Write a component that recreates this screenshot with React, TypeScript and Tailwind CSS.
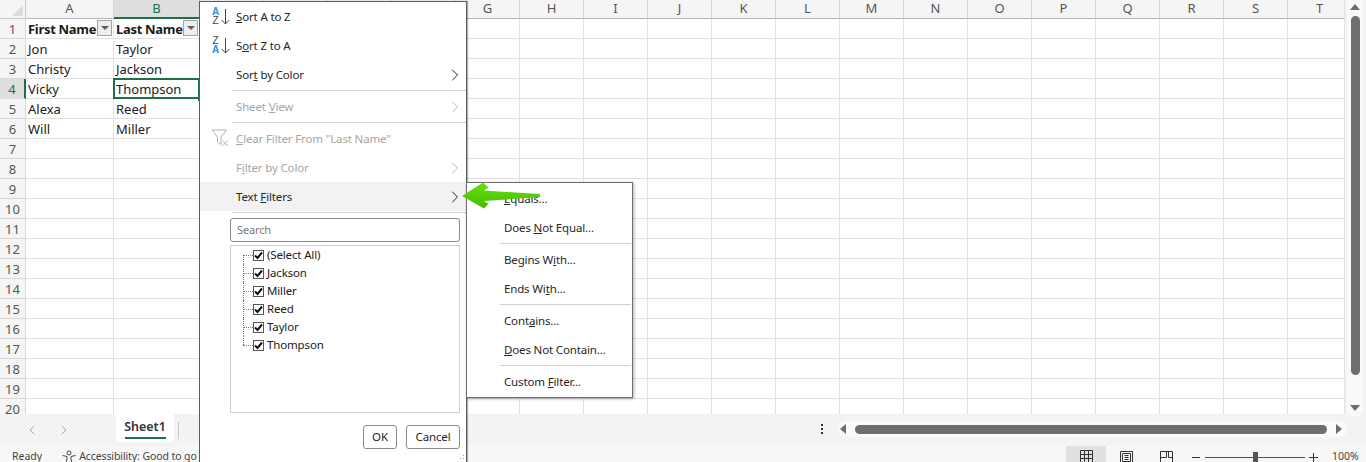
import { ChevronRight, ChevronLeft } from 'lucide-react';
import type { ReactNode } from 'react';

const widths = [88, 86, 64, 64, 64, 64, 64, 64, 64, 64, 64, 64, 64, 64, 64, 64, 64, 64, 64, 64];
const letters = 'ABCDEFGHIJKLMNOPQRST'.split('');
const rows = [
  ['First Name', 'Last Name'],
  ['Jon', 'Taylor'],
  ['Christy', 'Jackson'],
  ['Vicky', 'Thompson'],
  ['Alexa', 'Reed'],
  ['Will', 'Miller'],
];
const names = ['(Select All)', 'Jackson', 'Miller', 'Reed', 'Taylor', 'Thompson'];

function FilterButton() {
  return (
    <span className="absolute right-[1px] top-[1px] flex h-[16px] w-[15px] items-center justify-center border border-[#a6a6a6] bg-[#eeeeee]">
      <span className="h-0 w-0 border-x-[4px] border-t-[4px] border-x-transparent border-t-[#5f5f5f]" />
    </span>
  );
}

function Sheet() {
  return (
    <div className="h-[414px] overflow-hidden border-r border-[#e1e1e1] font-['Noto_Sans',sans-serif] text-[13px] text-[#1b1b1b]">
      <div className="flex h-[19px]">
        <div className="flex w-[26px] shrink-0 items-end justify-end border-r border-b border-[#c8c8c8] bg-[#f5f5f5] p-[2px]">
          <span className="h-0 w-0 border-b-[11px] border-l-[11px] border-b-[#dcdcdc] border-l-transparent" />
        </div>
        {letters.map((l, i) => (
          <div
            key={l}
            style={{ width: widths[i] }}
            className={
              i === 1
                ? 'flex shrink-0 items-center justify-center border-r border-b-2 border-[#d0d0d0] border-b-[#1f7145] bg-[#dedede] text-[13px] text-[#1f7145]'
                : 'flex shrink-0 items-center justify-center border-r border-b border-[#d4d4d4] border-b-[#b5b5b5] bg-[#f5f5f5] text-[13px] text-[#555555]'
            }
          >
            {i >= 2 && i <= 5 ? '' : l}
          </div>
        ))}
      </div>
      {Array.from({ length: 20 }, (_, r) => (
        <div key={r} className="flex h-[20px]">
          <div
            className={
              r === 3
                ? 'flex w-[26px] shrink-0 items-center justify-center border-r-2 border-b border-[#e0e0e0] border-r-[#1f7145] bg-[#dedede] text-[13px] leading-[14px] text-[#1f7145]'
                : 'flex w-[26px] shrink-0 items-center justify-center border-r border-b border-[#d8d8d8] bg-[#f5f5f5] text-[13px] leading-[14px] text-[#555555]'
            }
          >
            {r + 1}
          </div>
          {letters.map((l, c) => {
            const selected = r === 3 && c === 1;
            return (
              <div
                key={l}
                style={{ width: widths[c] }}
                className={
                  r === 0 && c < 2
                    ? 'relative flex shrink-0 items-center border-r border-b border-[#e1e1e1] pt-[2px] pl-[2px] font-bold tracking-[-0.3px]'
                    : 'relative flex shrink-0 items-center border-r border-b border-[#e1e1e1] pt-[2px] pl-[2px]'
                }
              >
                {c < 2 && rows[r] ? rows[r][c] : ''}
                {r === 0 && c < 2 && <FilterButton />}
                {selected && (
                  <>
                    <span className="absolute -top-[1px] -left-[1px] h-[21px] w-[87px] border-2 border-[#1f7145]" />
                    <span className="absolute top-[17px] left-[84px] h-[5px] w-[3px] bg-[#1f7145]" />
                  </>
                )}
              </div>
            );
          })}
        </div>
      ))}
    </div>
  );
}

function SortIcon({ flip }: { flip?: boolean }) {
  const blue = 'font-bold text-[#2f8fd8]';
  const dark = 'text-[#444444]';
  return (
    <span className="absolute top-[6px] left-[11px] flex h-[17px] items-start">
      <span className="flex w-[9px] flex-col items-center gap-[1px] font-['Liberation_Sans',sans-serif] text-[10px] leading-[8px]">
        <span className={flip ? dark : blue}>{flip ? 'Z' : 'A'}</span>
        <span className={flip ? blue : dark}>{flip ? 'A' : 'Z'}</span>
      </span>
      <svg width="9" height="17" viewBox="0 0 9 17" className="ml-[1px]">
        <path d="M4.500 1V16M0.700 12L4.500 16L8.300 12" fill="none" stroke="#444444" strokeWidth="1" />
      </svg>
    </span>
  );
}

function Item({ children, arrow, disabled, hot, icon }: { children: ReactNode; arrow?: boolean; disabled?: boolean; hot?: boolean; icon?: ReactNode }) {
  return (
    <div
      className={
        (hot ? 'bg-[#f2f2f2] ' : '') +
        (disabled ? 'text-[#a6a6a6] ' : 'text-[#262626] ') +
        'relative flex h-[29px] items-center justify-between pr-[1px] pl-[36px]'
      }
    >
      {icon}
      <span>{children}</span>
      {arrow && <ChevronRight size={20} strokeWidth={1.2} className={disabled ? 'text-[#b5b5b5]' : 'text-[#222222]'} />}
    </div>
  );
}

function Separator({ inset }: { inset: string }) {
  return (
    <div className={'flex h-[3px] items-center ' + inset}>
      <div className="h-[1px] w-full bg-[#d0d0d0]" />
    </div>
  );
}

function ClearFilterIcon() {
  return (
    <svg width="18" height="18" viewBox="0 0 18 18" className="absolute top-[5px] left-[11px]">
      <path d="M1 1H15.500L10 8V15.500L6.500 13V8Z" fill="none" stroke="#b3b3b3" strokeWidth="1" />
      <path d="M11.500 11.500L17 17M17 11.500L11.500 17" fill="none" stroke="#b3b3b3" strokeWidth="1" />
    </svg>
  );
}

function FilterMenu() {
  return (
    <div className="absolute top-[1px] left-[199px] flex h-[461px] w-[268px] flex-col border-x border-t border-[#5c5c5c] bg-white font-['Noto_Sans',sans-serif] text-[11.5px] tracking-[-0.15px] shadow-[1px_0_1px_rgba(0,0,0,0.3)]">
      <Item icon={<SortIcon />}><span className="underline">S</span>ort A to Z</Item>
      <Item icon={<SortIcon flip />}>S<span className="underline">o</span>rt Z to A</Item>
      <Item arrow>Sor<span className="underline">t</span> by Color</Item>
      <Separator inset="pl-[32px]" />
      <Item arrow disabled>Sheet <span className="underline">V</span>iew</Item>
      <Separator inset="pl-[32px]" />
      <Item disabled icon={<ClearFilterIcon />}><span className="underline">C</span>lear Filter From "Last Name"</Item>
      <Item arrow disabled>F<span className="underline">i</span>lter by Color</Item>
      <Item arrow hot>Text <span className="underline">F</span>ilters</Item>
      <Separator inset="pl-[32px]" />
      <div className="mt-[4px] mr-[6px] ml-[30px] flex h-[24px] items-center rounded-[3px] border border-[#8a8a8a] pl-[6px] text-[11px] text-[#7a7a7a]">
        Search
      </div>
      <div className="mt-[3px] mr-[6px] ml-[30px] h-[168px] border border-[#cfcfcf] pl-[22px] text-[#1b1b1b]">
        {names.map((name, i) => (
          <div key={name} className="relative flex h-[18px] items-center gap-[3px]">
            <span className={i === names.length - 1 ? 'absolute top-[0px] left-[-10px] h-[9px] border-l border-dotted border-[#777777]' : i === 0 ? 'absolute top-[9px] left-[-10px] h-[9px] border-l border-dotted border-[#777777]' : 'absolute top-0 left-[-10px] h-[18px] border-l border-dotted border-[#777777]'} />
            <span className="absolute top-[9px] left-[-10px] w-[10px] border-t border-dotted border-[#777777]" />
            <span className="flex h-[11px] w-[11px] items-center justify-center border border-[#555555] bg-white">
              <svg width="9" height="9" viewBox="0 0 9 9">
                <path d="M1 4.500L3.500 7L8 1.500" fill="none" stroke="#111111" strokeWidth="2" />
              </svg>
            </span>
            <span>{name}</span>
          </div>
        ))}
      </div>
      <div className="mt-[12px] mr-[6px] flex justify-end gap-[9px] text-[#262626]">
        <span className="flex h-[24px] w-[34px] items-center justify-center rounded-[3px] border border-[#8a8a8a]">OK</span>
        <span className="flex h-[24px] w-[54px] items-center justify-center rounded-[3px] border border-[#8a8a8a]">Cancel</span>
      </div>
      <svg width="8" height="8" viewBox="0 0 8 8" className="absolute right-[1px] bottom-0">
        <path d="M6 1h1v1H6zM3 4h1v1H3zM6 4h1v1H6z" fill="#9a9a9a" />
      </svg>
    </div>
  );
}

function TextFiltersMenu() {
  return (
    <div className="absolute top-[182px] left-[466px] w-[167px] border border-[#6e6e6e] bg-white py-[1px] font-['Noto_Sans',sans-serif] text-[11.5px] tracking-[-0.15px] text-[#262626] shadow-[1px_1px_3px_rgba(0,0,0,0.3)]">
      <div className="flex h-[29px] items-center pl-[37px]"><span><span className="underline">E</span>quals...</span></div>
      <div className="flex h-[29px] items-center pl-[37px]"><span>Does <span className="underline">N</span>ot Equal...</span></div>
      <Separator inset="pl-[33px] pr-[1px]" />
      <div className="flex h-[29px] items-center pl-[37px]"><span>Begins W<span className="underline">i</span>th...</span></div>
      <div className="flex h-[29px] items-center pl-[37px]"><span>Ends Wi<span className="underline">t</span>h...</span></div>
      <Separator inset="pl-[33px] pr-[1px]" />
      <div className="flex h-[29px] items-center pl-[37px]"><span>Cont<span className="underline">a</span>ins...</span></div>
      <div className="flex h-[29px] items-center pl-[37px]"><span><span className="underline">D</span>oes Not Contain...</span></div>
      <Separator inset="pl-[33px] pr-[1px]" />
      <div className="flex h-[29px] items-center pl-[37px]"><span>Custom <span className="underline">F</span>ilter...</span></div>
    </div>
  );
}

function GreenArrow() {
  return (
    <svg width="80" height="30" viewBox="0 0 80 30" className="absolute top-[181px] left-[461px]">
      <defs>
        <linearGradient id="arrowFill" x1="0" y1="0" x2="0" y2="1">
          <stop offset="0" stopColor="#66e012" />
          <stop offset="1" stopColor="#45bb00" />
        </linearGradient>
      </defs>
      <path d="M1 15L22 1.500L27.500 6.500L23 9.500L79 13V16L23 20L27.500 23L23 27.500Z" fill="url(#arrowFill)" />
    </svg>
  );
}

export default function App() {
  return (
    <div className="relative flex h-[462px] w-[1366px] flex-col overflow-hidden bg-[#f3f3f3]">
      <div className="flex h-[414px]">
        <div className="w-[1345px] overflow-hidden bg-white">
          <Sheet />
        </div>
        <div className="ml-[2px] flex h-[417px] w-[16px] flex-col items-center rounded-b-full bg-[#f9f9f9]">
          <span className="mt-[4px] h-0 w-0 border-x-[5px] border-b-[6px] border-x-transparent border-b-[#6e6e6e]" />
          <span className="mt-[6px] h-[359px] w-[9px] rounded-full bg-[#6e6e6e]" />
          <span className="mt-[30px] h-0 w-0 border-x-[5px] border-t-[6px] border-x-transparent border-t-[#6e6e6e]" />
        </div>
      </div>

      <div className="flex h-[32px] items-center font-['Noto_Sans',sans-serif] text-[#444444]">
        <div className="flex w-[116px] items-center gap-[16px] pl-[24px] text-[#9a9a9a]">
          <ChevronLeft size={16} strokeWidth={1.3} />
          <ChevronRight size={16} strokeWidth={1.3} />
        </div>
        <div className="flex h-[28px] w-[58px] flex-col items-center justify-center self-start rounded-b-[4px] bg-white pt-[1px] text-[12.5px] font-semibold text-[#333333]">
          Sheet1
          <span className="h-[2px] w-[41px] bg-[#1f7145]" />
        </div>
        <span className="ml-[4px] h-[17px] w-[1px] bg-[#c8c8c8]" />
        <div className="ml-auto flex h-[16px] w-[556px] -translate-y-[1px] items-center pr-[19px]">
          <span className="flex w-[24px] flex-col items-center gap-[2px]">
            <span className="h-[2px] w-[2px] bg-[#333333]" />
            <span className="h-[2px] w-[2px] bg-[#333333]" />
            <span className="h-[2px] w-[2px] bg-[#333333]" />
          </span>
          <div className="ml-[4px] flex h-[16px] flex-1 items-center rounded-full bg-[#fbfbfb] pr-[5px] pl-[2px]">
            <span className="h-0 w-0 border-y-[5px] border-r-[6px] border-y-transparent border-r-[#6e6e6e]" />
            <span className="mr-[9px] ml-[9px] h-[9px] flex-1 rounded-full bg-[#6e6e6e]" />
            <span className="h-0 w-0 border-y-[5px] border-l-[6px] border-y-transparent border-l-[#6e6e6e]" />
          </div>
        </div>
      </div>

      <div className="flex h-[16px] items-center bg-[#f7f7f7] pt-[6px] font-['Noto_Sans',sans-serif] text-[10.5px] text-[#444444]">
        <span className="ml-[12px]">Ready</span>
        <svg width="16" height="15" viewBox="0 0 16 15" className="ml-[19px]">
          <circle cx="8" cy="3" r="2" fill="none" stroke="#444444" strokeWidth="1" />
          <path d="M1.500 5.500L6 6.500V9L4.500 14M14.500 5.500L10 6.500V9L11.500 14" fill="none" stroke="#444444" strokeWidth="1" />
        </svg>
        <span className="ml-[2px] tracking-[-0.1px]">Accessibility: Good to go</span>
        <div className="ml-auto flex w-[300px] items-center">
          <span className="-mt-[6px] flex h-[16px] w-[40px] items-center justify-center bg-[#e0e0e0] pt-[4px]">
            <svg width="13" height="13" viewBox="0 0 13 13"><path d="M.5.5h12v12H.5zM4.500.5v12M8.500.5v12M.5 4.500h12M.5 8.500h12" fill="none" stroke="#333333" /></svg>
          </span>
          <span className="flex w-[40px] items-center justify-center">
            <svg width="13" height="13" viewBox="0 0 13 13"><path d="M.5.5h12v12H.5zM2.500 2.500h8v8h-8zM4.500 4.500h4M4.500 6.500h4M4.500 8.500h4" fill="none" stroke="#333333" /></svg>
          </span>
          <span className="flex w-[40px] items-center justify-center">
            <svg width="13" height="13" viewBox="0 0 13 13"><path d="M.5.500h12v12H.5zM.5 6.500h6V.5M8.500.5v6h4" fill="none" stroke="#333333" /></svg>
          </span>
          <svg width="8" height="1" viewBox="0 0 8 1" className="ml-[6px]"><path d="M0 .5h8" stroke="#333333" /></svg>
          <span className="relative ml-[5px] h-[1px] w-[100px] bg-[#555555]">
            <span className="absolute top-[-5px] left-[48px] h-[10px] w-[5px] bg-[#555555]" />
          </span>
          <svg width="9" height="9" viewBox="0 0 9 9" className="ml-[4px]"><path d="M0 4.500h9M4.500 0v9" stroke="#333333" /></svg>
          <span className="ml-[14px]">100%</span>
        </div>
      </div>

      <FilterMenu />
      <TextFiltersMenu />
      <GreenArrow />
    </div>
  );
}
